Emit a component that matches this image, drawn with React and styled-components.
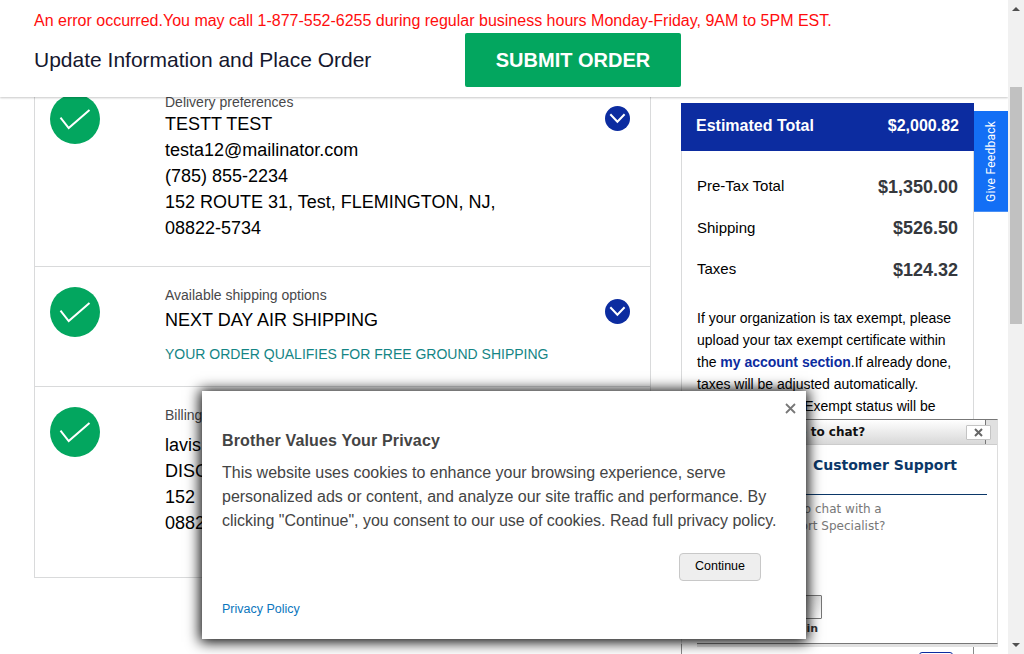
import React from "react";
import styled, { createGlobalStyle } from "styled-components";

const Global = createGlobalStyle`
  * { box-sizing: border-box; }
  body { margin: 0; background: #fff; font-family: "Liberation Sans", Arial, sans-serif; color: #000; overflow: hidden; }
  p, h1, h2, h3 { margin: 0; }
  button { font-family: inherit; }
`;

const Screen = styled.div`
  display: flex;
  width: 1024px;
  height: 654px;
  overflow: hidden;
`;
const Viewport = styled.div`
  position: relative;
  width: 1008px;
  height: 654px;
  overflow: hidden;
`;
const Header = styled.header`
  position: absolute;
  inset: 0 0 auto 0;
  height: 97px;
  padding: 10px 34px 0;
  background: #fff;
  box-shadow: 0 1px 2px rgba(0, 0, 0, 0.22);
`;
const ErrorText = styled.p`
  height: 23px;
  line-height: 22px;
  font-size: 16px;
  color: #ff0d0d;
  white-space: nowrap;
`;
const HeaderRow = styled.div`
  display: flex;
  align-items: center;
`;
const Title = styled.h1`
  width: 431px;
  font-size: 21px;
  font-weight: 400;
  color: #15172e;
`;
const Submit = styled.button`
  width: 216px;
  height: 54px;
  padding: 0;
  border: 0;
  border-radius: 2px;
  background: #03a65f;
  color: #fff;
  font-size: 20px;
  font-weight: 700;
`;

const Content = styled.main`
  display: flex;
  align-items: flex-start;
  gap: 30px;
  padding: 74px 0 0 34px;
`;
const Steps = styled.section`
  width: 617px;
  border: 1px solid #d9dadb;
  border-top: 0;
`;
const Step = styled.article`
  display: flex;
  align-items: flex-start;
  height: ${(p) => p.$height}px;
  padding: 20px 20px 0 15px;
  & + & { border-top: 1px solid #d9dadb; }
`;
const CheckIcon = styled.svg`
  width: 50px;
  height: 50px;
  flex: none;
`;
const StepBody = styled.div`
  width: 505px;
  margin-top: -1px;
  padding-left: 65px;
`;
const Label = styled.h3`
  height: ${(p) => p.$height}px;
  font-size: 14px;
  font-weight: 400;
  line-height: 18px;
  color: #48484a;
`;
const Line = styled.p`
  font-size: 18px;
  line-height: 26px;
  white-space: nowrap;
`;
const Notice = styled.p`
  margin-top: 12px;
  font-size: 14px;
  line-height: 18px;
  color: #148585;
`;
const ToggleIcon = styled.svg`
  width: 25px;
  height: 25px;
  flex: none;
  margin-top: 12px;
`;

const Sidebar = styled.aside`
  width: 293px;
  margin-top: 29px;
`;
const Summary = styled.section`
  height: 541px;
  border: 1px solid #d9dadb;
  border-bottom: 0;
`;
const SummaryHead = styled.div`
  display: flex;
  justify-content: space-between;
  height: 48px;
  margin: -1px -1px 15px;
  padding: 0 15px;
  background: #0c2ca0;
  color: #fff;
  font-size: 16px;
  font-weight: 700;
  line-height: 45px;
`;
const Price = styled.div`
  display: flex;
  justify-content: space-between;
  align-items: center;
  height: 41.5px;
  padding: 0 15px;
  font-size: 15px;
  span { padding-bottom: 2px; }
  strong { padding-top: 1px; font-size: 18px; color: #35383d; }
`;
const TaxNote = styled.p`
  padding: 16px 15px 0;
  font-size: 14px;
  line-height: 22px;
  letter-spacing: -0.01px;
  white-space: nowrap;
  strong { color: #0c2ca0; }
`;
const SummaryFooter = styled.div`
  height: 40px;
  padding: 8px 20px 0 0;
  border: 1px solid #8a8a8a;
  border-width: 0 1px;
`;
const SmallButton = styled.span`
  display: block;
  width: 34px;
  height: 24px;
  margin-left: auto;
  border: 1px solid #0c2ca0;
  border-radius: 3px;
`;

const Feedback = styled.div`
  position: absolute;
  top: 111px;
  right: 0;
  width: 34px;
  height: 101px;
  background: #136ff5;
  border-top: 1px solid #4a90f5;
  color: #fff;
  font: 12px/34px Roboto, sans-serif;
  letter-spacing: 0.25px;
  text-align: center;
  writing-mode: vertical-rl;
  transform: rotate(180deg);
`;

const Chat = styled.section`
  position: absolute;
  top: 419px;
  left: 697px;
  width: 301px;
  height: 225px;
  background: #fff;
  border-top: 1px solid #777;
  border-right: 1px solid #ddd;
  border-bottom: 1px solid #777;
  box-shadow: 0 3px 0 #e1e1e1;
  font-family: "DejaVu Sans", Verdana, sans-serif;
`;
const ChatBar = styled.div`
  display: flex;
  align-items: center;
  justify-content: space-between;
  height: 25px;
  padding: 0 6px 0 39px;
  background: linear-gradient(90deg, transparent 288px, #777 288px, #777 289px, #e0e0e0 289px), linear-gradient(#fff, #d8d8d8);
  border-bottom: 1px solid #ccc;
  font-size: 12px;
  font-weight: 700;
  color: #111;
`;
const ChatClose = styled.span`
  display: grid;
  place-items: center;
  width: 25px;
  height: 15px;
  margin-top: 1px;
  border: 1px solid #c4c4c4;
  border-radius: 1px;
  background: #fff;
`;
const ChatTitle = styled.h2`
  height: 50px;
  margin: 0 10px 0 5px;
  padding-right: 30px;
  border-bottom: 1px solid #0b3768;
  color: #0b3768;
  font-size: 14px;
  line-height: 40px;
  text-align: right;
`;
const ChatText = styled.p`
  padding: 6px 0 0 11px;
  color: #777;
  font-size: 12px;
  line-height: 17px;
`;
const ChatField = styled.div`
  width: 100px;
  height: 24px;
  margin: 60px 0 0 25px;
  border: 1px solid #777;
  border-radius: 1px;
  background: linear-gradient(#e0e0e0, #fff);
`;
const ChatAgain = styled.p`
  width: 121px;
  color: #333;
  font-size: 11px;
  font-weight: 700;
  line-height: 20px;
  text-align: right;
`;

const Dialog = styled.section`
  position: absolute;
  top: 391px;
  left: 202px;
  width: 604px;
  height: 248px;
  padding: 38px 20px 0;
  background: #fff;
  box-shadow: 0 1px 13px 2px #000;
  color: #444;
`;
const DialogClose = styled.svg`
  position: absolute;
  top: 12px;
  right: 10px;
  width: 11px;
  height: 11px;
`;
const DialogTitle = styled.h2`
  font-size: 16px;
  line-height: 24px;
  letter-spacing: 0.16px;
`;
const DialogText = styled.p`
  margin-top: 8px;
  font-size: 16px;
  line-height: 24px;
  letter-spacing: -0.01px;
  white-space: nowrap;
`;
const Continue = styled.button`
  display: block;
  width: 82px;
  height: 28px;
  margin: 20px 0 0 457px;
  padding: 0 0 3px;
  border: 1px solid #c8c8c8;
  border-radius: 4px;
  background: #eee;
  color: #000;
  font-size: 12.5px;
`;
const PolicyLink = styled.a`
  display: block;
  margin-top: 19px;
  color: #0b76bd;
  font-size: 12.5px;
  line-height: 18px;
`;

const Scrollbar = styled.div`
  display: flex;
  flex-direction: column;
  align-items: center;
  width: 16px;
  height: 654px;
  background: #f1f1f1;
`;
const Thumb = styled.div`
  width: 12px;
  height: 237px;
  margin: 70px 0 313px;
  background: #c1c1c1;
`;
const Arrow = styled.svg`
  width: 16px;
  height: 17px;
`;

const Check = () => (
  <CheckIcon viewBox="0 0 50 50">
    <circle cx="25" cy="25" r="25" fill="#03a65f" />
    <path d="M10.5 23.7L18.7 34L39.5 16" fill="none" stroke="#fff" strokeWidth="2" />
  </CheckIcon>
);
const Toggle = () => (
  <ToggleIcon viewBox="0 0 25 25">
    <circle cx="12.5" cy="12.5" r="12.5" fill="#0c2ca0" />
    <path d="M5.3 8.3L12.4 15.8L19.6 8.3" fill="none" stroke="#fff" strokeWidth="2" />
  </ToggleIcon>
);

const steps = [
  { height: 192, label: "Delivery preferences", gap: 18, lines: ["TESTT TEST", "testa12@mailinator.com", "(785) 855-2234", "152 ROUTE 31, Test, FLEMINGTON, NJ,", "08822-5734"] },
  { height: 120, label: "Available shipping options", gap: 21, lines: ["NEXT DAY AIR SHIPPING"], notice: "YOUR ORDER QUALIFIES FOR FREE GROUND SHIPPING" },
  { height: 191, label: "Billing", gap: 26, lines: ["lavis", "DISC", "152", "0882"] },
];
const prices = [["Pre-Tax Total", "$1,350.00"], ["Shipping", "$526.50"], ["Taxes", "$124.32"]];

export default function App() {
  return (
    <Screen>
      <Global />
      <Viewport>
        <Content>
          <Steps>
            {steps.map((s) => (
              <Step key={s.label} $height={s.height}>
                <Check />
                <StepBody>
                  <Label $height={s.gap}>{s.label}</Label>
                  {s.lines.map((l) => <Line key={l}>{l}</Line>)}
                  {s.notice && <Notice>{s.notice}</Notice>}
                </StepBody>
                <Toggle />
              </Step>
            ))}
          </Steps>
          <Sidebar>
            <Summary>
              <SummaryHead><span>Estimated Total</span><span>$2,000.82</span></SummaryHead>
              {prices.map(([name, value]) => (
                <Price key={name}><span>{name}</span><strong>{value}</strong></Price>
              ))}
              <TaxNote>
                If your organization is tax exempt, please<br />
                upload your tax exempt certificate within<br />
                the <strong>my account section</strong>.If already done,<br />
                taxes will be adjusted automatically.<br />
                Otherwise, State Exempt status will be
              </TaxNote>
            </Summary>
            <SummaryFooter><SmallButton /></SummaryFooter>
          </Sidebar>
        </Content>
        <Header>
          <ErrorText>An error occurred.You may call 1-877-552-6255 during regular business hours Monday-Friday, 9AM to 5PM EST.</ErrorText>
          <HeaderRow>
            <Title>Update Information and Place Order</Title>
            <Submit>SUBMIT ORDER</Submit>
          </HeaderRow>
        </Header>
        <Feedback>Give Feedback</Feedback>
        <Chat>
          <ChatBar>
            <span>Would like to chat?</span>
            <ChatClose>
              <svg width="9" height="9" viewBox="0 0 9 9"><path d="M1 1L8 8M8 1L1 8" stroke="#666" strokeWidth="2" /></svg>
            </ChatClose>
          </ChatBar>
          <ChatTitle>Customer Support</ChatTitle>
          <ChatText>Would you like to chat with a<br />Customer Support Specialist?</ChatText>
          <ChatField />
          <ChatAgain>in</ChatAgain>
        </Chat>
        <Dialog>
          <DialogClose viewBox="0 0 11 11"><path d="M1 1L10 10M10 1L1 10" stroke="#777" strokeWidth="1.8" /></DialogClose>
          <DialogTitle>Brother Values Your Privacy</DialogTitle>
          <DialogText>
            This website uses cookies to enhance your browsing experience, serve<br />
            personalized ads or content, and analyze our site traffic and performance. By<br />
            clicking "Continue", you consent to our use of cookies. Read full privacy policy.
          </DialogText>
          <Continue>Continue</Continue>
          <PolicyLink>Privacy Policy</PolicyLink>
        </Dialog>
      </Viewport>
      <Scrollbar>
        <Arrow viewBox="0 0 16 17"><path d="M4 11L8 7L12 11Z" fill="#505050" /></Arrow>
        <Thumb />
        <Arrow viewBox="0 0 16 17"><path d="M4 6L8 10L12 6Z" fill="#505050" /></Arrow>
      </Scrollbar>
    </Screen>
  );
}
